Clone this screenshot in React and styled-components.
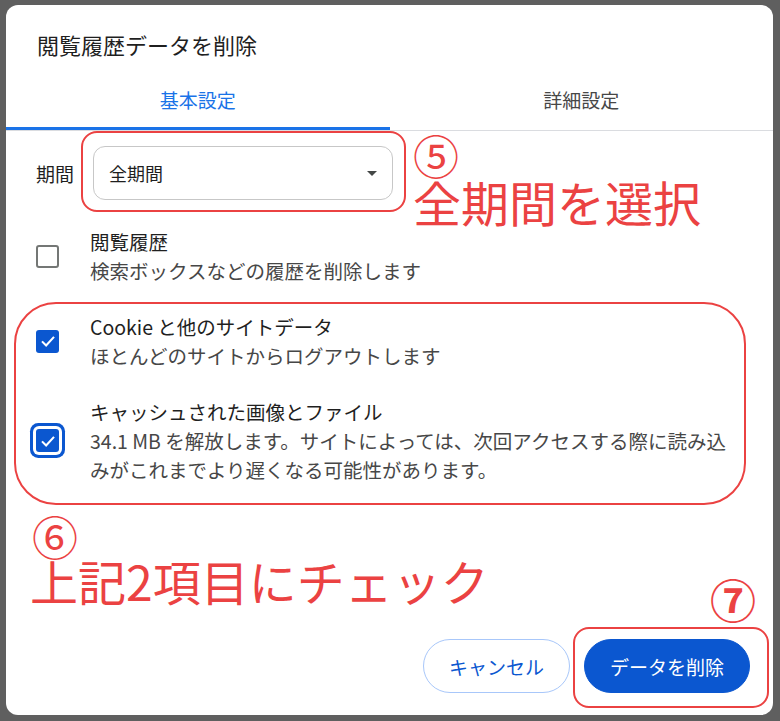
import styled, { createGlobalStyle } from 'styled-components';

const GlobalStyle = createGlobalStyle`
  html, body {
    margin: 0;
    background: #5f5f5f;
  }
  body {
    font-family: "Noto Sans CJK JP", "Noto Sans", sans-serif;
    color: #1f1f1f;
  }
`

const Page = styled.div`
  width: 780px;
  height: 721px;
  padding: 5px 0 0 6px;
  box-sizing: border-box;
`

const Dialog = styled.div`
  position: relative;
  width: 767px;
  height: 710px;
  background: #fff;
  border-radius: 12px;
  display: flex;
  flex-direction: column;
`

const Title = styled.h2`
  margin: 0;
  padding: 24px 0 0 31px;
  font-size: 22px;
  line-height: 30px;
  font-weight: 400;
  color: #1f1f1f;
`

const Tabs = styled.div`
  display: flex;
  margin-top: 13px;
  border-bottom: 1px solid #dadce0;
`

const Tab = styled.div`
  flex: 1 1 0;
  height: 58px;
  box-sizing: border-box;
  display: flex;
  align-items: center;
  justify-content: center;
  font-size: 19px;
  color: ${p => p.$active ? '#1a73e8' : '#474747'};
  border-bottom: 3px solid ${p => p.$active ? '#1a73e8' : 'transparent'};
`

const Body = styled.div`
  padding: 15px 38px 0 30px;
`

const PeriodRow = styled.div`
  display: flex;
  align-items: center;
  gap: 19px;
`

const PeriodLabel = styled.span`
  font-size: 19px;
  color: #1f1f1f;
`

const Select = styled.div`
  width: 300px;
  height: 54px;
  box-sizing: border-box;
  border: 1px solid #c7c7c7;
  border-radius: 12px;
  display: flex;
  align-items: center;
  justify-content: space-between;
  padding: 0 15px;
  font-size: 18px;
  color: #1f1f1f;
`

const Caret = styled.span`
  width: 0;
  height: 0;
  border-left: 5.5px solid transparent;
  border-right: 5.5px solid transparent;
  border-top: 5.5px solid #444746;
`

const Options = styled.div`
  display: flex;
  flex-direction: column;
  gap: 27px;
  margin-top: 27px;
`

const Option = styled.div`
  display: flex;
  align-items: center;
`

const CheckCell = styled.div`
  width: 54px;
  flex: 0 0 54px;
  display: flex;
  align-items: center;
`

const Box = styled.span`
  width: 23px;
  height: 23px;
  box-sizing: border-box;
  border-radius: 3px;
  display: flex;
  align-items: center;
  justify-content: center;
  background: ${p => p.$checked ? '#0b57d0' : '#fff'};
  border: ${p => p.$checked ? 'none' : '2.5px solid #747775'};
  box-shadow: ${p => p.$focus ? '0 0 0 3px #fff, 0 0 0 6px #0b57d0' : 'none'};
`

const OptionText = styled.div`
  flex: 1;
  font-size: 19.5px;
  line-height: 29px;
`

const Label = styled.div`
  color: #1f1f1f;
`

const Desc = styled.div`
  color: #474747;
`

const Footer = styled.div`
  margin-top: auto;
  display: flex;
  justify-content: flex-end;
  gap: 14px;
  padding: 0 23px 22px 0;
`

const Button = styled.button`
  height: 54px;
  border-radius: 27px;
  font-family: inherit;
  font-size: 19px;
  padding: 0 25px;
  min-width: ${p => p.$primary ? 165 : 146}px;
  border: 1px solid ${p => p.$primary ? '#0b57d0' : '#a8c7fa'};
  background: ${p => p.$primary ? '#0b57d0' : '#fff'};
  color: ${p => p.$primary ? '#fff' : '#0b57d0'};
`

/* annotation layer drawn over the dialog */
const red = '#eb4242';

const Mark = styled.div`
  position: absolute;
  left: ${p => p.$x}px;
  top: ${p => p.$y}px;
  width: ${p => p.$w}px;
  height: ${p => p.$h}px;
  border: 2.5px solid ${red};
  border-radius: ${p => p.$r}px;
  box-sizing: border-box;
  pointer-events: none;
`

const Num = styled.div`
  position: absolute;
  left: ${p => p.$x}px;
  top: ${p => p.$y}px;
  font-size: 46px;
  line-height: 42px;
  color: ${red};
  font-weight: ${p => p.$bold ? 700 : 400};
`

const Note = styled.div`
  position: absolute;
  left: ${p => p.$x}px;
  top: ${p => p.$y}px;
  font-size: 48px;
  line-height: 48px;
  color: ${red};
  white-space: nowrap;
`

const Check = () => (
  <svg width="18" height="18" viewBox="0 0 24 24">
    <polyline points="4,12.5 9.5,18 20,6.5" fill="none" stroke="#fff" strokeWidth="2.8" />
  </svg>
)

const options = [
  { label: '閲覧履歴', desc: '検索ボックスなどの履歴を削除します', checked: false },
  { label: 'Cookie と他のサイトデータ', desc: 'ほとんどのサイトからログアウトします', checked: true },
  {
    label: 'キャッシュされた画像とファイル',
    desc: '34.1 MB を解放します。サイトによっては、次回アクセスする際に読み込みがこれまでより遅くなる可能性があります。',
    checked: true,
    focus: true,
  },
]

const App = () => {
  return (
    <>
      <GlobalStyle />
      <Page>
        <Dialog>
          <Title>閲覧履歴データを削除</Title>
          <Tabs>
            <Tab $active>基本設定</Tab>
            <Tab>詳細設定</Tab>
          </Tabs>
          <Body>
            <PeriodRow>
              <PeriodLabel>期間</PeriodLabel>
              <Select>
                全期間
                <Caret />
              </Select>
            </PeriodRow>
            <Options>
              {options.map(o => (
                <Option key={o.label}>
                  <CheckCell>
                    <Box $checked={o.checked} $focus={o.focus}>
                      {o.checked && <Check />}
                    </Box>
                  </CheckCell>
                  <OptionText>
                    <Label>{o.label}</Label>
                    <Desc>{o.desc}</Desc>
                  </OptionText>
                </Option>
              ))}
            </Options>
          </Body>
          <Footer>
            <Button>キャンセル</Button>
            <Button $primary>データを削除</Button>
          </Footer>

          <Mark $x={75} $y={126} $w={325} $h={81} $r={16} />
          <Num $x={407} $y={128}>⑤</Num>
          <Note $x={407} $y={172}>全期間を選択</Note>

          <Mark $x={8} $y={297} $w={732} $h={203} $r={42} />
          <Num $x={26} $y={509}>⑥</Num>
          <Note $x={24} $y={551}>上記2項目にチェック</Note>

          <Num $x={704} $y={572} $bold>⑦</Num>
          <Mark $x={567} $y={622} $w={196} $h={81} $r={16} />
        </Dialog>
      </Page>
    </>
  );
}

export default App;
